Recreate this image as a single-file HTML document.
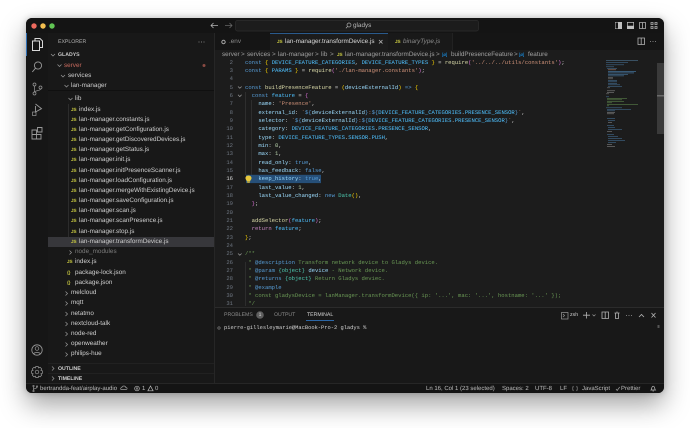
<!DOCTYPE html>
<html><head><meta charset="utf-8"><style>
html,body{margin:0;padding:0;width:690px;height:428px;overflow:hidden;background:#fff}
#w{position:absolute;left:26px;top:18px;width:638px;height:375px;background:#181818;border-radius:6px;box-shadow:0 12px 26px rgba(0,0,0,.36),0 0 7px rgba(0,0,0,.22)}
#a{position:absolute;left:0;top:0;width:690px;height:428px;overflow:hidden;font-family:"Liberation Sans",sans-serif;filter:blur(.3px);text-rendering:geometricPrecision}
.t,.c,.n{position:absolute;white-space:pre;line-height:10px;height:10px}
.t{font-size:6.35px;color:#cfcfcf}
.c,.n{font-family:"Liberation Mono",monospace;font-size:5.56px;color:#d4d4d4}
.c{left:245px}
.n{left:213px;width:20px;text-align:right;color:#6e7681}
.j{position:absolute;font-size:4.6px;font-weight:bold;color:#cbcb41;line-height:10px;height:10px;font-family:"Liberation Sans",sans-serif}
.b{position:absolute}
svg{position:absolute;overflow:visible}
.k{color:#569cd6}.v{color:#4fc1ff}.f{color:#dcdcaa}.p{color:#9cdcfe}.s{color:#ce9178}.u{color:#b5cea8}.g{color:#6a9955}.y{color:#ffd700}.m{color:#da70d6}.e{color:#4ec9b0}.r{color:#c586c0}.h{color:#179fff}
.i{fill:none;stroke:#b4b4b4;stroke-width:.8}
.x{fill:none;stroke:#9a9a9a;stroke-width:.7}
</style></head><body>
<div id="w"></div>
<div id="a">
<div class="b" style="left:26px;top:18px;width:638px;height:15px;background:#141414;border-radius:6px 6px 0 0"></div>
<div class="b" style="left:26px;top:33px;width:22px;height:350px;background:#161616"></div>
<div class="b" style="left:48px;top:33px;width:166px;height:350px;background:#181818"></div>
<div class="b" style="left:214px;top:33px;width:450px;height:17px;background:#151515"></div>
<div class="b" style="left:270px;top:33px;width:118px;height:17px;background:#1c1c1c;border-top:1px solid #2a5a8c;box-sizing:border-box"></div>
<div class="b" style="left:388px;top:33px;width:65px;height:17px;background:#191919;border-right:1px solid #222;box-sizing:border-box"></div>
<div class="b" style="left:214px;top:50px;width:450px;height:257px;background:#1c1c1c"></div>
<div class="b" style="left:214px;top:307px;width:450px;height:76px;background:#181818;border-top:1px solid #2b2b2b;box-sizing:border-box"></div>
<div class="b" style="left:214px;top:33px;width:1px;height:350px;background:#262626"></div>
<div class="b" style="left:26px;top:383px;width:638px;height:10px;background:#141414;border-top:1px solid #262626;box-sizing:border-box;border-radius:0 0 6px 6px"></div>
<svg style="left:0;top:0" width="690" height="428">
<circle cx="34" cy="26" r="2.7" fill="#ed6a5e"/><circle cx="43" cy="26" r="2.7" fill="#f4bf4f"/><circle cx="52" cy="26" r="2.7" fill="#61c554"/>
<path class="i" d="M218 25.5h-7M213.500 23l-2.500 2.500 2.500 2.500"/>
<path class="i" style="stroke:#666" d="M225 25.500h7M229.500 23l2.500 2.500-2.500 2.500"/>
<rect x="235.500" y="20.500" width="243" height="10.500" rx="2" fill="#1c1c1c" stroke="#2e2e2e" stroke-width=".7"/>
<circle cx="349" cy="25" r="2" class="x" style="stroke:#b0b0b0"/><path class="x" style="stroke:#b0b0b0" d="M347.600 26.500l-1.700 1.700"/>
<path d="M615 22h7v7h-7z M615.500 22.500v6h2.500v-6z" fill="#c0c0c0" fill-rule="evenodd"/>
<path d="M627 22h7v7h-7z M627.700 22.700v3h5.600v-3z" fill="#c0c0c0" fill-rule="evenodd"/>
<path class="i" d="M639.500 22.500h6v6h-6zM642.500 22.500v6"/>
<path class="i" d="M651 22.500h2v2h-2zM655 22.500h2v2h-2zM651 26.500h2v2h-2zM655 26.500h2v2h-2z"/>
<path class="i" d="M638 38h6.500v6.500h-6.500zM641.200 38v6.500"/>
<circle cx="650.500" cy="41.500" r=".45" fill="#aaa"/><circle cx="653" cy="41.500" r=".45" fill="#aaa"/><circle cx="655.500" cy="41.500" r=".45" fill="#aaa"/>
<rect x="26" y="33" width="1" height="23" fill="#2f6fb5"/>
<path fill="none" stroke="#d8d8d8" stroke-width="1" d="M35 41v-2.500h5l2.500 2.500v6.500h-3M32.500 41h7v9.500h-7z"/>
<circle cx="38" cy="65.500" r="3.600" class="x" style="stroke-width:.9"/><path class="x" style="stroke-width:.9" d="M35.500 68.200l-3.200 3.800"/>
<circle cx="34.500" cy="84.500" r="1.500" class="x"/><circle cx="34.500" cy="93.500" r="1.500" class="x"/><circle cx="40.500" cy="87.500" r="1.500" class="x"/><path class="x" d="M34.500 86v6M40.500 89c0 2-6 1.500-6 3"/>
<path class="x" style="stroke-width:.9" d="M35.500 106v6l6 -3.300l-6-4.700"/><rect x="32.500" y="112" width="3.500" height="3.500" class="x"/>
<path class="x" style="stroke-width:.9" d="M32 130h4.500v4.500H32zM32 134.500h4.500V139H32zM36.500 134.500H41V139h-4.500zM37.500 127.500H42V132h-4.500z"/>
<circle cx="37" cy="350" r="5.200" class="x" style="stroke-width:.8"/><circle cx="37" cy="348.500" r="1.800" class="x"/><path class="x" d="M33.500 354c.8-2 6.200-2 7 0"/>
<circle cx="37" cy="372" r="1.800" class="x"/><path class="x" d="M35.800 366.500h2.400l.4 1.500 1.500-.7 1.600 1.600-.8 1.500 1.600.5v2.300l-1.600.5.800 1.500-1.600 1.600-1.500-.7-.4 1.500h-2.400l-.4-1.500-1.500.7-1.600-1.600.8-1.500-1.600-.5v-2.300l1.600-.5-.8-1.500 1.600-1.600 1.500.7z"/>
<rect x="48" y="237" width="166" height="10" fill="#37373b"/>
<rect x="48" y="90" width="166" height=".8" fill="#0e0e0e"/>
<path d="M68.700 104v133" stroke="#3a3a3a" stroke-width=".6"/>
<circle cx="199" cy="42" r=".45" fill="#aaa"/><circle cx="201.500" cy="42" r=".45" fill="#aaa"/><circle cx="204" cy="42" r=".45" fill="#aaa"/>
<circle cx="204" cy="65.500" r="1.500" fill="#8a4a42"/>
<g class="x" fill="none">
<path d="M51 54l2 2 2-2M57.500 64.500l2 2 2-2M61 75l2 2 2-2M64.500 85l2 2 2-2M68.500 98l2 2 2-2"/>
<path d="M69.500 250.500l2 2-2 2M65.500 291.500l2 2-2 2M65.500 301.500l2 2-2 2M65.500 312l2 2-2 2M65.500 322l2 2-2 2M65.500 332l2 2-2 2M65.500 342.500l2 2-2 2M65.500 352.500l2 2-2 2M52 366.500l2 2-2 2M52 376.500l2 2-2 2"/>
</g>
<path d="M48 363.500h166M48 373.500h166" stroke="#2a2a2a" stroke-width=".6"/>
<circle cx="223.500" cy="42" r="1.700" fill="none" stroke="#a8a8a8" stroke-width="1"/>
<path class="i" d="M379 40l3.500 3.500M382.500 40L379 43.500"/>
<path d="M245.500 92v83M251.700 100v83" stroke="#3a3a3a" stroke-width=".6"/>
<path d="M245.500 262v44" stroke="#3a3a3a" stroke-width=".6"/>
<path class="x" d="M238 86.500l1.800 1.800 1.800-1.800M238 94.800l1.800 1.800 1.800-1.800M238 253.500l1.800 1.800 1.800-1.800"/>
<rect x="246" y="174.800" width="75" height="8.300" fill="#264f78"/>
<g fill="#4a7da8" opacity=".8">
<rect x="606" y="60" width="32" height=".6" fill="#5a8ab0"/><rect x="606" y="62" width="22" height=".6"/><rect x="606" y="64.500" width="18" height=".6"/><rect x="606" y="66.500" width="8" height=".6"/><rect x="607" y="68" width="10" height=".6"/><rect x="608" y="69.500" width="8" height=".6" fill="#c08a70"/>
<rect x="608" y="71" width="28" height=".8"/><rect x="608" y="72.500" width="26" height=".8"/><rect x="608" y="74" width="20" height=".7"/><rect x="608" y="75.500" width="16" height=".7"/>
<rect x="608" y="77" width="5" height=".6" fill="#888"/><rect x="608" y="78.500" width="5" height=".6" fill="#888"/><rect x="608" y="80" width="9" height=".6"/><rect x="608" y="81.500" width="9" height=".6"/><rect x="608" y="83" width="9" height=".6"/><rect x="608" y="84.500" width="12" height=".6"/><rect x="608" y="86" width="14" height=".6"/><rect x="607" y="87.500" width="3" height=".6" fill="#888"/>
<rect x="607" y="90.500" width="8" height=".6" fill="#999"/><rect x="607" y="92" width="7" height=".6" fill="#999"/><rect x="606" y="93.500" width="3" height=".6" fill="#888"/>
<rect x="606" y="96.500" width="3" height=".6"/><rect x="607" y="98" width="20" height=".6" fill="#6a9955"/><rect x="607" y="99.500" width="15" height=".6" fill="#6a9955"/><rect x="607" y="101" width="17" height=".6" fill="#6a9955"/><rect x="607" y="102.500" width="5" height=".6" fill="#6a9955"/><rect x="607" y="104" width="31" height=".6" fill="#6a9955"/><rect x="607" y="105.500" width="2" height=".6" fill="#6a9955"/>
<rect x="606" y="107.500" width="16" height=".6"/><rect x="607" y="109" width="24" height=".6"/><rect x="607" y="110.500" width="8" height=".6"/><rect x="607" y="112" width="8" height=".6" fill="#999"/><rect x="607" y="113.500" width="7" height=".6" fill="#999"/>
<rect x="607" y="118" width="8" height=".6"/><rect x="608" y="120" width="7" height=".6"/><rect x="608" y="122" width="4" height=".6" fill="#999"/><rect x="607" y="125" width="7" height=".6"/><rect x="608" y="127" width="7" height=".6"/><rect x="608" y="129" width="14" height=".6"/><rect x="607" y="131" width="5" height=".6" fill="#999"/>
<rect x="607" y="134" width="7" height=".6"/><rect x="608" y="136" width="10" height=".6"/><rect x="608" y="138" width="14" height=".6"/><rect x="608" y="140" width="17" height=".6"/><rect x="608" y="142" width="8" height=".6"/><rect x="607" y="144" width="5" height=".6" fill="#999"/><rect x="607" y="146" width="8" height=".6" fill="#999"/>
</g>
<rect x="657" y="63" width="7" height="71" fill="#3a3a3a"/><rect x="657" y="95" width="7" height="1.500" fill="#6a6a6a"/>
<path d="M248.500 175.500c-2.200 0-3.200 1.500-3 3 .1 1 1.200 1.600 1.500 3h3c.3-1.400 1.400-2 1.500-3 .2-1.500-.8-3-3-3z" fill="#e8c83c"/><rect x="247.200" y="181.800" width="2.600" height="1" fill="#d0b030"/>
<circle cx="260" cy="315" r="3.800" fill="#5e5e5e"/>
<rect x="306" y="320" width="28" height=".9" fill="#2f6fb5"/>
<circle cx="219" cy="328" r="1.200" fill="none" stroke="#8a8a8a" stroke-width=".6"/>
<rect x="561.500" y="312.500" width="6.500" height="6.500" class="x"/><path class="x" d="M563 314l1.500 1.500-1.500 1.500"/>
<path class="i" d="M586.500 312v6.500M583 315.200h7"/><path class="x" d="M592.500 314.500l1.500 1.500 1.500-1.500"/>
<path class="i" d="M602 312h6.500v6.500H602zM605.200 312v6.500"/>
<path class="i" d="M614.500 313h5M615.500 313v5.500h3v-5.500M616.500 312h1"/>
<circle cx="626.500" cy="315.500" r=".45" fill="#aaa"/><circle cx="629" cy="315.500" r=".45" fill="#aaa"/><circle cx="631.500" cy="315.500" r=".45" fill="#aaa"/>
<path class="i" d="M639 317l2.500-2.500 2.500 2.500M651.500 313l4 4.500M655.500 313l-4 4.500"/>
<rect x="657.500" y="325" width="2" height="3" fill="#555"/>
<circle cx="33.500" cy="386" r=".7" class="x"/><circle cx="33.500" cy="391" r=".7" class="x"/><circle cx="37" cy="386.500" r=".7" class="x"/><path class="x" d="M33.500 386.800v3.500M37 387.200c0 1.500-3.500 1-3.500 2.500"/>
<path class="x" d="M121 389.500h5c1.500 0 1.500-2-.2-2-.4-2-3.500-2-4 0-1.300 0-1.500 2-.8 2z"/>
<circle cx="137" cy="388.500" r="2.300" class="x" style="stroke:#bbb"/><path class="x" d="M136 387.500l2 2M138 387.500l-2 2"/>
<path class="x" style="stroke:#bbb" d="M150.500 386l2.600 4.800h-5.200z"/>
<path class="x" d="M616 389l1.200 1.500 2.500-3.500"/>
<path class="x" d="M573.500 386.200c-1 0-.3 2.300-1 2.300.7 0 0 2.300 1 2.300M576.500 386.200c1 0 .3 2.300 1 2.300-.7 0 0 2.300-1 2.300"/>
<path class="x" style="stroke:#bbb" d="M651 390h4.400c-.9-.8-.4-3.800-2.200-3.800s-1.300 3-2.200 3.800zM652.600 391h1.200"/>
</svg>

<div class="t" style="left:58px;top:37px;font-size:5.2px;color:#b0b0b0">EXPLORER</div>
<div class="t" style="left:58px;top:50px;font-size:5.2px;font-weight:bold;color:#c8c8c8">GLADYS</div>
<div class="t" style="left:64px;top:60.5px;color:#c76a5e">server</div>
<div class="t" style="left:68px;top:70.5px">services</div>
<div class="t" style="left:71px;top:81px">lan-manager</div>
<div class="t" style="left:75px;top:94px">lib</div>
<div class="j" style="left:71px;top:104.5px">JS</div><div class="t" style="left:79px;top:104.5px">index.js</div>
<div class="j" style="left:71px;top:114.7px">JS</div><div class="t" style="left:79px;top:114.7px">lan-manager.constants.js</div>
<div class="j" style="left:71px;top:124.8px">JS</div><div class="t" style="left:79px;top:124.8px">lan-manager.getConfiguration.js</div>
<div class="j" style="left:71px;top:135px">JS</div><div class="t" style="left:79px;top:135px">lan-manager.getDiscoveredDevices.js</div>
<div class="j" style="left:71px;top:145.2px">JS</div><div class="t" style="left:79px;top:145.2px">lan-manager.getStatus.js</div>
<div class="j" style="left:71px;top:155.3px">JS</div><div class="t" style="left:79px;top:155.3px">lan-manager.init.js</div>
<div class="j" style="left:71px;top:165.5px">JS</div><div class="t" style="left:79px;top:165.5px">lan-manager.initPresenceScanner.js</div>
<div class="j" style="left:71px;top:175.7px">JS</div><div class="t" style="left:79px;top:175.7px">lan-manager.loadConfiguration.js</div>
<div class="j" style="left:71px;top:185.8px">JS</div><div class="t" style="left:79px;top:185.8px">lan-manager.mergeWithExistingDevice.js</div>
<div class="j" style="left:71px;top:196px">JS</div><div class="t" style="left:79px;top:196px">lan-manager.saveConfiguration.js</div>
<div class="j" style="left:71px;top:206.2px">JS</div><div class="t" style="left:79px;top:206.2px">lan-manager.scan.js</div>
<div class="j" style="left:71px;top:216.3px">JS</div><div class="t" style="left:79px;top:216.3px">lan-manager.scanPresence.js</div>
<div class="j" style="left:71px;top:226.5px">JS</div><div class="t" style="left:79px;top:226.5px">lan-manager.stop.js</div>
<div class="j" style="left:71px;top:236.7px">JS</div><div class="t" style="left:79px;top:236.7px">lan-manager.transformDevice.js</div>
<div class="t" style="left:75px;top:247px;color:#7c7c7c">node_modules</div>
<div class="j" style="left:67px;top:257px">JS</div><div class="t" style="left:75px;top:257px">index.js</div>
<div class="j" style="left:67px;top:267.5px">{}</div><div class="t" style="left:75px;top:267.5px">package-lock.json</div>
<div class="j" style="left:67px;top:277.7px">{}</div><div class="t" style="left:75px;top:277.7px">package.json</div>
<div class="t" style="left:71px;top:288px">melcloud</div>
<div class="t" style="left:71px;top:298px">mqtt</div>
<div class="t" style="left:71px;top:308.5px">netatmo</div>
<div class="t" style="left:71px;top:318.7px">nextcloud-talk</div>
<div class="t" style="left:71px;top:328.7px">node-red</div>
<div class="t" style="left:71px;top:339px">openweather</div>
<div class="t" style="left:71px;top:349px">philips-hue</div>
<div class="t" style="left:58px;top:363.5px;font-size:5.2px;font-weight:bold">OUTLINE</div>
<div class="t" style="left:58px;top:373.5px;font-size:5.2px;font-weight:bold">TIMELINE</div>

<div class="t" style="left:353px;top:20.5px;color:#b8b8b8">gladys</div>

<div class="t" style="left:229px;top:37px;color:#8a8a8a">.env</div>
<div class="j" style="left:277px;top:37px">JS</div><div class="t" style="left:285px;top:37px;color:#dadada">lan-manager.transformDevice.js</div>
<div class="j" style="left:395px;top:37px">JS</div><div class="t" style="left:403px;top:37px;color:#8a8a8a;font-style:italic">binaryType.js</div>

<div class="t" style="left:222px;top:50px;color:#a0a0a0">server</div><div class="t" style="left:241px;top:50px;color:#a0a0a0">&gt;</div>
<div class="t" style="left:247px;top:50px;color:#a0a0a0">services</div><div class="t" style="left:272px;top:50px;color:#a0a0a0">&gt;</div>
<div class="t" style="left:278px;top:50px;color:#a0a0a0">lan-manager</div><div class="t" style="left:315px;top:50px;color:#a0a0a0">&gt;</div>
<div class="t" style="left:321px;top:50px;color:#a0a0a0">lib</div><div class="t" style="left:330px;top:50px;color:#a0a0a0">&gt;</div>
<div class="j" style="left:337px;top:50px">JS</div><div class="t" style="left:345px;top:50px;color:#a0a0a0">lan-manager.transformDevice.js</div><div class="t" style="left:436px;top:50px;color:#a0a0a0">&gt;</div>
<div class="t" style="left:442px;top:50px;font-size:4.5px" ><span class="h">[ø]</span></div><div class="t" style="left:451px;top:50px;color:#a0a0a0">buildPresenceFeature</div><div class="t" style="left:514px;top:50px;color:#a0a0a0">&gt;</div>
<div class="t" style="left:519px;top:50px;font-size:4.5px"><span class="h">[ø]</span></div><div class="t" style="left:528px;top:50px;color:#a0a0a0">feature</div>

<div class="b" style="left:214px;top:58px;width:390px;height:249px;overflow:hidden">
<div style="position:absolute;left:-214px;top:-58px;width:690px;height:428px">
<div class="n" style="top:57.7px">2</div><div class="c" style="top:57.7px"><span class="k">const</span> <span class="y">{</span> <span class="v">DEVICE_FEATURE_CATEGORIES</span>, <span class="v">DEVICE_FEATURE_TYPES</span> <span class="y">}</span> = <span class="f">require</span><span class="m">(</span><span class="s">'../../../utils/constants'</span><span class="m">)</span>;</div>
<div class="n" style="top:66px">3</div><div class="c" style="top:66px"><span class="k">const</span> <span class="y">{</span> <span class="v">PARAMS</span> <span class="y">}</span> = <span class="f">require</span><span class="m">(</span><span class="s">'./lan-manager.constants'</span><span class="m">)</span>;</div>
<div class="n" style="top:74.3px">4</div>
<div class="n" style="top:82.6px">5</div><div class="c" style="top:82.6px"><span class="k">const</span> <span class="f">buildPresenceFeature</span> = <span class="y">(</span><span class="p">deviceExternalId</span><span class="y">)</span> <span class="k">=&gt;</span> <span class="y">{</span></div>
<div class="n" style="top:91px">6</div><div class="c" style="top:91px">  <span class="k">const</span> <span class="v">feature</span> = <span class="m">{</span></div>
<div class="n" style="top:99.3px">7</div><div class="c" style="top:99.3px">    <span class="p">name</span>: <span class="s">'Presence'</span>,</div>
<div class="n" style="top:107.6px">8</div><div class="c" style="top:107.6px">    <span class="p">external_id</span>: <span class="s">`</span><span class="k">${</span><span class="p">deviceExternalId</span><span class="k">}</span><span class="s">:</span><span class="k">${</span><span class="v">DEVICE_FEATURE_CATEGORIES</span>.<span class="v">PRESENCE_SENSOR</span><span class="k">}</span><span class="s">`</span>,</div>
<div class="n" style="top:116px">9</div><div class="c" style="top:116px">    <span class="p">selector</span>: <span class="s">`</span><span class="k">${</span><span class="p">deviceExternalId</span><span class="k">}</span><span class="s">:</span><span class="k">${</span><span class="v">DEVICE_FEATURE_CATEGORIES</span>.<span class="v">PRESENCE_SENSOR</span><span class="k">}</span><span class="s">`</span>,</div>
<div class="n" style="top:124.3px">10</div><div class="c" style="top:124.3px">    <span class="p">category</span>: <span class="v">DEVICE_FEATURE_CATEGORIES</span>.<span class="v">PRESENCE_SENSOR</span>,</div>
<div class="n" style="top:132.6px">11</div><div class="c" style="top:132.6px">    <span class="p">type</span>: <span class="v">DEVICE_FEATURE_TYPES</span>.<span class="v">SENSOR</span>.<span class="v">PUSH</span>,</div>
<div class="n" style="top:141px">12</div><div class="c" style="top:141px">    <span class="p">min</span>: <span class="u">0</span>,</div>
<div class="n" style="top:149.3px">13</div><div class="c" style="top:149.3px">    <span class="p">max</span>: <span class="u">1</span>,</div>
<div class="n" style="top:157.6px">14</div><div class="c" style="top:157.6px">    <span class="p">read_only</span>: <span class="k">true</span>,</div>
<div class="n" style="top:166px">15</div><div class="c" style="top:166px">    <span class="p">has_feedback</span>: <span class="k">false</span>,</div>
<div class="n" style="top:174.3px;color:#d8d8d8">16</div><div class="c" style="top:174.3px">    <span class="p">keep_history</span>: <span class="k">true</span>,</div>
<div class="n" style="top:182.6px">17</div><div class="c" style="top:182.6px">    <span class="p">last_value</span>: <span class="u">1</span>,</div>
<div class="n" style="top:191px">18</div><div class="c" style="top:191px">    <span class="p">last_value_changed</span>: <span class="k">new</span> <span class="e">Date</span><span class="y">()</span>,</div>
<div class="n" style="top:199.3px">19</div><div class="c" style="top:199.3px">  <span class="m">}</span>;</div>
<div class="n" style="top:207.6px">20</div>
<div class="n" style="top:216px">21</div><div class="c" style="top:216px">  <span class="f">addSelector</span><span class="m">(</span><span class="v">feature</span><span class="m">)</span>;</div>
<div class="n" style="top:224.3px">22</div><div class="c" style="top:224.3px">  <span class="r">return</span> <span class="v">feature</span>;</div>
<div class="n" style="top:232.6px">23</div><div class="c" style="top:232.6px"><span class="y">}</span>;</div>
<div class="n" style="top:241px">24</div>
<div class="n" style="top:249.3px">25</div><div class="c g" style="top:249.3px">/**</div>
<div class="n" style="top:257.6px">26</div><div class="c g" style="top:257.6px"> * <span class="k">@description</span> Transform network device to Gladys device.</div>
<div class="n" style="top:266px">27</div><div class="c g" style="top:266px"> * <span class="k">@param</span> <span class="e">{object}</span> <span class="p">device</span> - Network device.</div>
<div class="n" style="top:274.3px">28</div><div class="c g" style="top:274.3px"> * <span class="k">@returns</span> <span class="e">{object}</span> Return Gladys deviec.</div>
<div class="n" style="top:282.6px">29</div><div class="c g" style="top:282.6px"> * <span class="k">@example</span></div>
<div class="n" style="top:291px">30</div><div class="c g" style="top:291px"> * const gladysDevice = lanManager.transformDevice({ ip: '...', mac: '...', hostname: '...' });</div>
<div class="n" style="top:299.3px">31</div><div class="c g" style="top:299.3px"> */</div>
</div></div>

<div class="t" style="left:224px;top:310px;font-size:5.2px;color:#8a8a8a">PROBLEMS</div>
<div class="t" style="left:258.6px;top:310px;font-size:5px;color:#ddd">1</div>
<div class="t" style="left:274px;top:310px;font-size:5.2px;color:#8a8a8a">OUTPUT</div>
<div class="t" style="left:307px;top:310px;font-size:5.2px;color:#d0d0d0">TERMINAL</div>
<div class="c" style="left:224px;top:323px;font-size:5.4px">pierre-gillesleymarie@MacBook-Pro-2 gladys %</div>
<div class="t" style="left:570px;top:310px;font-size:5.2px">zsh</div>

<div class="t" style="left:40px;top:383.5px;font-size:6px;color:#bdbdbd">bertrandda-feat/airplay-audio</div>
<div class="t" style="left:142px;top:383.5px;font-size:6px;color:#bdbdbd">1</div>
<div class="t" style="left:155px;top:383.5px;font-size:6px;color:#bdbdbd">0</div>
<div class="t" style="left:426px;top:383.5px;font-size:6px;color:#bdbdbd">Ln 16, Col 1 (23 selected)</div>
<div class="t" style="left:502px;top:383.5px;font-size:6px;color:#bdbdbd">Spaces: 2</div>
<div class="t" style="left:535px;top:383.5px;font-size:6px;color:#bdbdbd">UTF-8</div>
<div class="t" style="left:560px;top:383.5px;font-size:6px;color:#bdbdbd">LF</div>
<div class="t" style="left:582px;top:383.5px;font-size:6px;color:#bdbdbd">JavaScript</div>
<div class="t" style="left:621px;top:383.5px;font-size:6px;color:#bdbdbd">Prettier</div>
</div>
</body></html>
